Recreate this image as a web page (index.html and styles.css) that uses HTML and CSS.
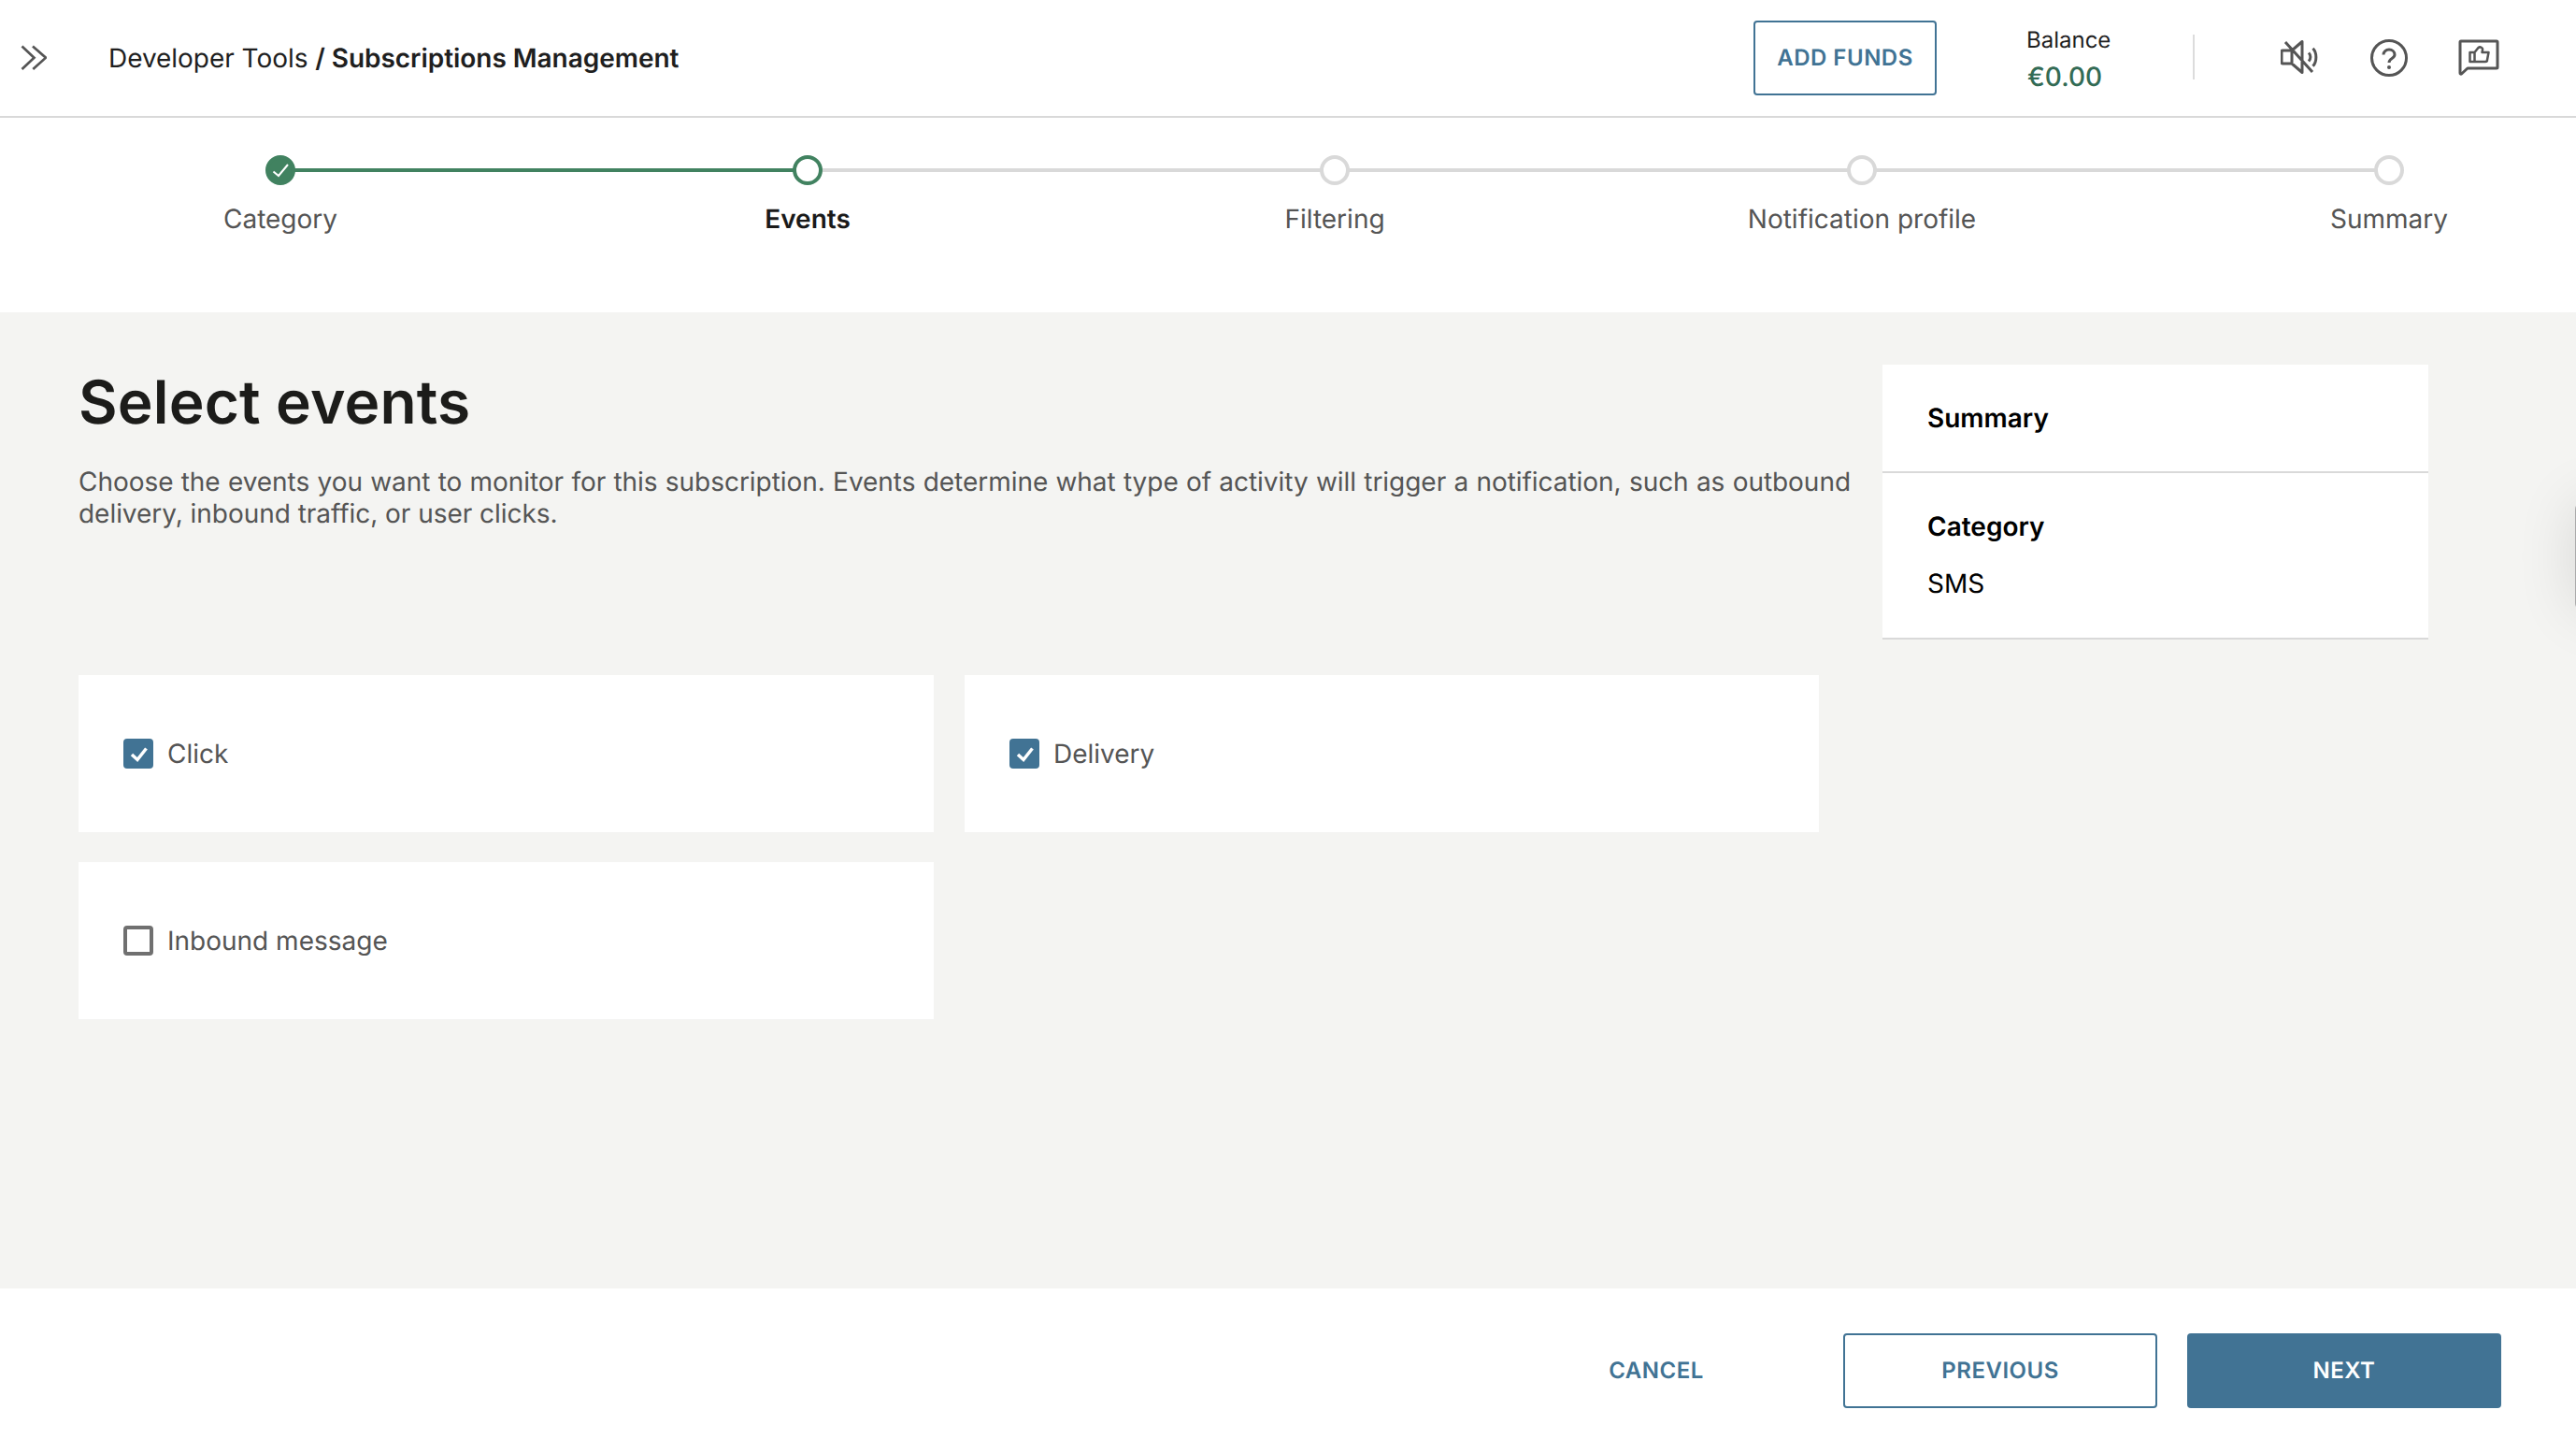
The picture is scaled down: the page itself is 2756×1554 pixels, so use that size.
FILE: index.html
```html
<!DOCTYPE html>
<html lang="en">
<head>
<meta charset="utf-8">
<title>Subscriptions Management</title>
<link rel="stylesheet" href="styles.css">
</head>
<body>
<div class="app">
  <header class="topbar">
    <svg class="expand" viewBox="0 0 28 28" width="28" height="28"><path d="M1.500 1.500l13 12.200-13 12.300M13 1.500l14 12.200-13.700 12.300"/></svg>
    <div class="crumbs">Developer Tools <strong>/ Subscriptions Management</strong></div>
    <a class="btn btn-outline btn-funds">ADD FUNDS</a>
    <div class="balance">
      <div class="balance-label">Balance</div>
      <div class="balance-value">€0.00</div>
    </div>
    <div class="divider"></div>
    <div class="icons">
      <svg class="icon" viewBox="0 0 42 38" width="42" height="38"><path d="M2 11h10v14H2a1 1 0 0 1-1-1V12a1 1 0 0 1 1-1zM12 11L23 1.500v33L12 25M5 2l29 32M30 13.500c2.500 2.500 2.500 6.500 0 9M34.500 8.700c4.500 4.500 4.500 14.500 0 19"/></svg>
      <svg class="icon" viewBox="0 0 40 40" width="40" height="40"><circle cx="20" cy="20" r="18.500"/><path d="M14 16.500c0-3.200 2.700-5.500 6-5.500s6 2.300 6 5.500c0 4.500-6 3.500-6 8.500"/><circle class="dot" cx="20" cy="30" r="2"/></svg>
      <svg class="icon" viewBox="0 0 44 40" width="44" height="40"><path d="M3 2h38a1 1 0 0 1 1 1v27a1 1 0 0 1-1 1H10l-6.500 6a1 1 0 0 1-1.500-1V3a1 1 0 0 1 1-1z"/><path class="thin" d="M12.500 14h5v10h-5zM17.500 14l4-5c2-1.500 5 0 4.500 2.500l-.5 2.500h7l-1.500 8a2 2 0 0 1-2 2H17.500"/></svg>
    </div>
  </header>

  <nav class="stepper">
    <div class="step done"><span class="node"><svg viewBox="0 0 32 32" width="32" height="32"><path d="M8.500 17.500l5.500 4.500 10-12"/></svg></span><span class="step-label">Category</span></div>
    <div class="step current"><span class="node"></span><span class="step-label">Events</span></div>
    <div class="step"><span class="node"></span><span class="step-label">Filtering</span></div>
    <div class="step"><span class="node"></span><span class="step-label">Notification profile</span></div>
    <div class="step last"><span class="node"></span><span class="step-label">Summary</span></div>
  </nav>

  <main class="content">
    <section class="main-col">
      <h1>Select events</h1>
      <p class="intro">Choose the events you want to monitor for this subscription. Events determine what type of activity will trigger a notification, such as outbound delivery, inbound traffic, or user clicks.</p>
      <div class="cards">
        <div class="card"><span class="check on"><svg viewBox="0 0 32 32" width="32" height="32"><path d="M9 17l6 5.500 9.500-12"/></svg></span>Click</div>
        <div class="card"><span class="check on"><svg viewBox="0 0 32 32" width="32" height="32"><path d="M9 17l6 5.500 9.500-12"/></svg></span>Delivery</div>
        <div class="card"><span class="check"></span>Inbound message</div>
      </div>
    </section>
    <aside class="summary">
      <div class="summary-head">Summary</div>
      <div class="summary-body">
        <div class="summary-title">Category</div>
        <div class="summary-value">SMS</div>
      </div>
    </aside>
    <div class="edge-shadow"></div>
  </main>

  <footer class="footer">
    <a class="btn btn-text btn-wide">CANCEL</a>
    <a class="btn btn-outline btn-wide">PREVIOUS</a>
    <a class="btn btn-solid btn-wide">NEXT</a>
  </footer>
</div>
</body>
</html>
```
FILE: styles.css
```css
* { box-sizing: border-box; }
html, body { margin: 0; height: 100%; }
body { font-family: Inter, "Noto Sans", sans-serif; color: #1a1a1a; background: #fff; overflow: hidden; text-rendering: geometricPrecision; }
.app { display: flex; flex-direction: column; height: 1554px; width: 2756px; overflow: hidden; }

.topbar { height: 126px; flex: none; display: flex; align-items: center; border-bottom: 2px solid #d9d9d9; padding-left: 22px; }
.expand { flex: none; margin-top: -1px; }
.expand path { fill: none; stroke: #555; stroke-width: 2.7; }
.crumbs { margin-left: 66px; font-size: 28px; line-height: 34px; color: #1f1f1f; flex: 1; letter-spacing: -0.04px; }
.crumbs strong { font-weight: 600; }

.btn { display: flex; align-items: center; justify-content: center; font-size: 24px; font-weight: 600; letter-spacing: 0.5px; color: #417394; border-radius: 4px; height: 80px; }
.btn-outline { border: 2px solid #417394; background: #fff; }
.btn-funds { width: 196px; margin-top: -1px; }
.btn-solid { background: #417394; color: #fff; }
.btn-wide { width: 336px; padding-bottom: 2px; }

.balance { margin-left: 96px; width: 178px; flex: none; margin-top: 2px; }
.balance-label { font-size: 24px; line-height: 30px; color: #1f1f1f; }
.balance-value { font-size: 28px; line-height: 34px; font-weight: 500; color: #336b55; margin-top: 7px; padding-left: 1px; }
.divider { width: 2px; height: 48px; background: #dcdcdc; flex: none; margin-top: -2px; }
.icons { display: flex; align-items: center; margin-left: 92px; margin-right: 82px; gap: 54px; }
.icon { flex: none; }
.icon path, .icon circle { fill: none; stroke: #555; stroke-width: 3; stroke-linejoin: round; }
.icon path.thin { stroke-width: 2.5; }
.icon circle.dot { fill: #555; stroke: none; }

.stepper { flex: none; height: 208px; display: grid; grid-template-columns: repeat(5, 564px); padding-left: 18px; padding-top: 40px; background: #fff; overflow: hidden; }
.step { position: relative; display: flex; flex-direction: column; align-items: center; }
.node { width: 32px; height: 32px; border-radius: 50%; border: 4px solid #d9d9d9; background: #fff; position: relative; z-index: 1; display: flex; align-items: center; justify-content: center; }
.node svg { flex: none; }
.step::after { content: ""; position: absolute; top: 14px; left: 50%; width: 100%; height: 4px; background: #d9d9d9; }
.step.last::after { display: none; }
.step.done::after { background: #418260; }
.step.done .node { background: #418260; border-color: #418260; }
.step.done .node svg path { fill: none; stroke: #fff; stroke-width: 2; }
.step.current .node { border-color: #418260; }
.step-label { margin-top: 19px; font-size: 28px; line-height: 34px; color: #555; white-space: nowrap; }
.step.current .step-label { color: #1a1a1a; font-weight: 600; }

.content { flex: 1; display: flex; background: #f4f4f2; position: relative; padding: 56px 0 0 84px; }
.main-col { width: 1900px; flex: none; }
h1 { margin: 2px 0 0; font-size: 64px; line-height: 78px; font-weight: 600; letter-spacing: 0.15px; color: #1c1c1a; }
.intro { margin: 28px 0 0; font-size: 28px; line-height: 34px; color: #555; width: 1896px; text-align: justify; letter-spacing: -0.04px; }
.cards { display: grid; grid-template-columns: 915px 914px; gap: 32px 33px; margin-top: 156px; }
.card { background: #fff; height: 168px; display: flex; align-items: center; padding-left: 48px; font-size: 28px; color: #555; }
.check { width: 32px; height: 32px; border-radius: 4px; border: 4px solid #707070; margin-right: 15px; flex: none; }
.check.on { background: #417394; border: 0; }
.check svg { display: block; }
.check svg path { fill: none; stroke: #fff; stroke-width: 3.5; }

.summary { margin-left: 30px; width: 584px; height: 294px; background: #fff; border-bottom: 2px solid #d9d9d9; flex: none; }
.summary-head { height: 116px; border-bottom: 2px solid #d9d9d9; padding: 40px 0 0 48px; font-size: 28px; line-height: 34px; font-weight: 600; color: #000; }
.summary-body { padding: 40px 0 0 48px; }
.summary-title { font-size: 28px; line-height: 34px; font-weight: 600; color: #000; }
.summary-value { font-size: 28px; line-height: 34px; color: #000; margin-top: 27px; }

.edge-shadow { position: absolute; left: 2755px; top: 203px; width: 60px; height: 116px; border-radius: 8px; background: #aaa; box-shadow: 0 0 64px rgba(0,0,0,.12); }

.footer { flex: none; height: 176px; background: #fff; display: flex; align-items: flex-start; justify-content: flex-end; padding: 48px 80px 0 0; gap: 32px; }
```
